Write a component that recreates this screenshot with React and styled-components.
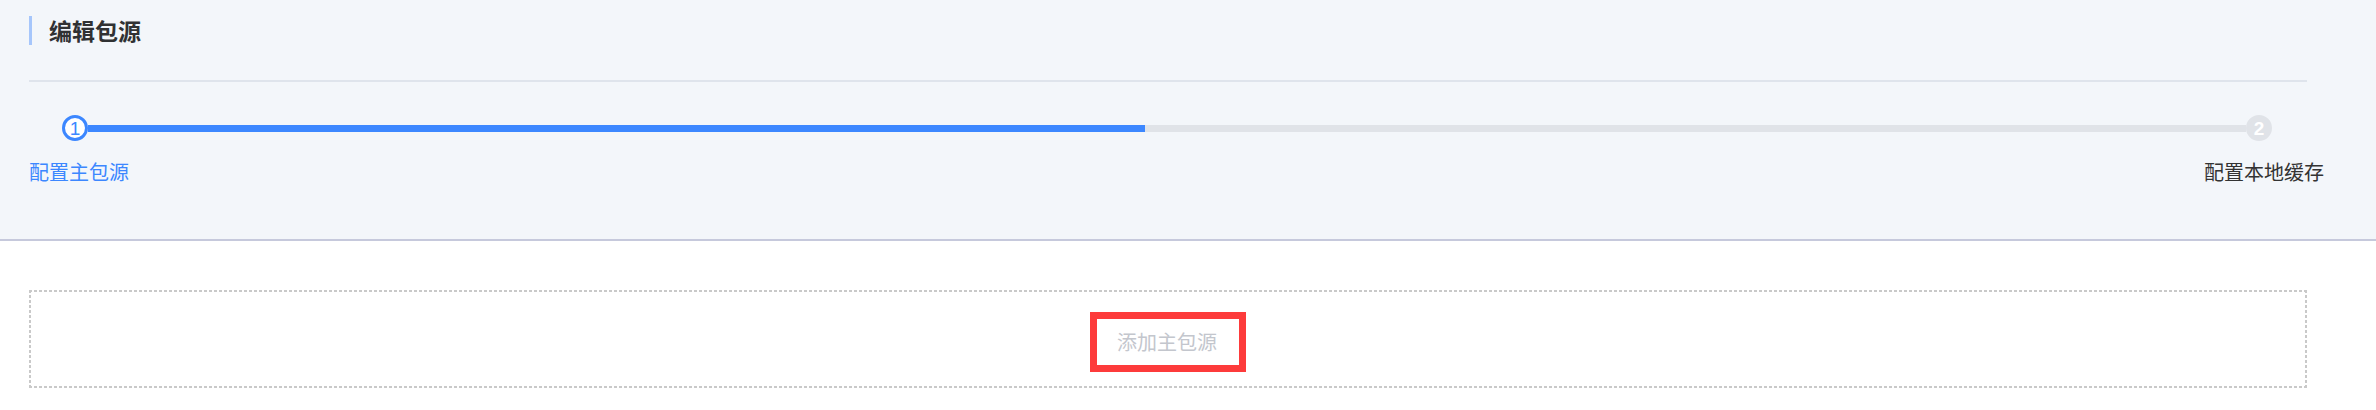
import React from 'react';
import styled, { createGlobalStyle } from 'styled-components';

const GlobalStyle = createGlobalStyle`
  html, body {
    margin: 0;
    padding: 0;
    background: #fff;
    font-family: "Noto Sans", "Noto Sans CJK SC", sans-serif;
  }
  * {
    box-sizing: border-box;
  }
`;

const Page = styled.div`
  width: 2376px;
  height: 410px;
  background: #fff;
  overflow: hidden;
`;

const Header = styled.header`
  background: #f3f6fa;
  border-bottom: 2px solid #c6c9dc;
  padding: 16px 0 55px 0;
`;

const TitleWrap = styled.div`
  padding: 0 69px 0 29px;
`;

const Title = styled.h2`
  margin: 0;
  height: 29px;
  line-height: 29px;
  padding-left: 17px;
  border-left: 3px solid #a6c6fb;
  font-size: 23px;
  font-weight: 700;
  color: #303133;
  font-family: "Noto Sans CJK SC", sans-serif;
`;

const Divider = styled.div`
  height: 2px;
  margin-top: 35px;
  background: #dfe4ec;
`;

const Stepper = styled.div`
  padding: 0 52px 0 29px;
  margin-top: 33px;
`;

const CircleRow = styled.div`
  display: flex;
  align-items: center;
  margin: 0 52px 0 33px;
`;

const Circle = styled.div`
  width: 26px;
  height: 26px;
  border-radius: 50%;
  flex: none;
  display: flex;
  align-items: center;
  justify-content: center;
  font-family: "Liberation Sans", sans-serif;
  font-size: 19px;
  line-height: 1;
  background: ${(p) => (p.$active ? '#fff' : '#e0e3e8')};
  border: 3px solid ${(p) => (p.$active ? '#3c87ff' : '#e0e3e8')};
  color: ${(p) => (p.$active ? '#3c87ff' : '#fff')};
  font-weight: ${(p) => (p.$active ? 400 : 700)};
`;

const Track = styled.div`
  flex: 1;
  height: 7px;
  background: linear-gradient(
    to right,
    #3c87ff 0,
    #3c87ff ${(p) => p.$progress}%,
    #e0e3e8 ${(p) => p.$progress}%,
    #e0e3e8 100%
  );
`;

const LabelRow = styled.div`
  display: flex;
  justify-content: space-between;
  margin-top: 19px;
`;

const StepLabel = styled.span`
  font-family: "Noto Sans CJK SC", sans-serif;
  font-size: 20px;
  line-height: 24px;
  color: ${(p) => (p.$active ? '#3c87ff' : '#333')};
`;

const Body = styled.main`
  padding: 49px 69px 0 29px;
`;

const DropZone = styled.div`
  height: 98px;
  padding: 22px 0 12px;
  display: flex;
  justify-content: center;
  background:
    repeating-linear-gradient(to right, #c9c9c9 0 3px, transparent 3px 5px) top left / 100% 2px no-repeat,
    repeating-linear-gradient(to right, #c9c9c9 0 3px, transparent 3px 5px) bottom left / 100% 2px no-repeat,
    repeating-linear-gradient(to bottom, #c9c9c9 0 3px, transparent 3px 5px) top left / 2px 100% no-repeat,
    repeating-linear-gradient(to bottom, #c9c9c9 0 3px, transparent 3px 5px) top right / 2px 100% no-repeat;
`;

const AddButton = styled.button`
  height: 60px;
  padding: 0 22px 0 20px;
  border: 7px solid #fd3b3b;
  background: transparent;
  font-family: "Noto Sans CJK SC", sans-serif;
  font-size: 20px;
  line-height: 46px;
  color: #c3c6cd;
  cursor: pointer;
`;

export default function App() {
  return (
    <Page>
      <GlobalStyle />
      <Header>
        <TitleWrap>
          <Title>编辑包源</Title>
          <Divider />
        </TitleWrap>
        <Stepper>
          <CircleRow>
            <Circle $active>1</Circle>
            <Track $progress={49} />
            <Circle>2</Circle>
          </CircleRow>
          <LabelRow>
            <StepLabel $active>配置主包源</StepLabel>
            <StepLabel>配置本地缓存</StepLabel>
          </LabelRow>
        </Stepper>
      </Header>
      <Body>
        <DropZone>
          <AddButton>添加主包源</AddButton>
        </DropZone>
      </Body>
    </Page>
  );
}
